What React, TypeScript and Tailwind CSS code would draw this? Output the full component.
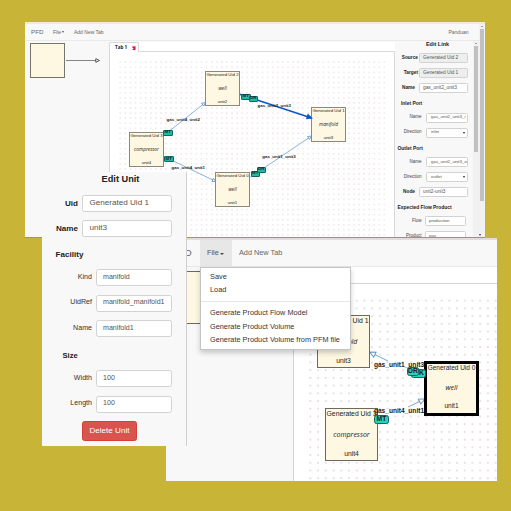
import React from "react";

type NodeData = { x: number; y: number; uid: string; kind: string; name: string; selected?: boolean };
type LinkData = { x1: number; y1: number; x2: number; y2: number; active?: boolean };
type LabelData = { x: number; y: number; text: string };
type BadgeData = { x: number; y: number; text: string };

type DiagramProps = {
  big?: boolean;
  nodes: NodeData[];
  links: LinkData[];
  labels: LabelData[];
  badges: BadgeData[];
};

function ArrowHead({ link, big }: { link: LinkData; big?: boolean }) {
  const angle = (Math.atan2(link.y2 - link.y1, link.x2 - link.x1) * 180) / Math.PI;
  const at = `translate(${link.x2} ${link.y2}) rotate(${angle})`;
  if (link.active) return <path d="M0 0L-6.5 -3V3Z" fill="#0b57c8" transform={at} />;
  return big ? (
    <path d="M0 0L-6 -2.7V2.7Z" fill="#fff" stroke="#5b90c8" strokeWidth="0.9" transform={at} />
  ) : (
    <path d="M0 0L-3.6 -1.7V1.7Z" fill="#fff" stroke="#5f97cf" strokeWidth="0.8" transform={at} />
  );
}

function Diagram({ big, nodes, links, labels, badges }: DiagramProps) {
  return (
    <div className="relative h-full w-full overflow-hidden font-['Liberation_Sans',sans-serif] text-[#222]">
      <svg className="absolute inset-0 h-full w-full">
        <defs>
          {big ? (
            <pattern id="grid-big" x="12.5" y="12.8" width="7.72" height="7.72" patternUnits="userSpaceOnUse">
              <circle cx="3.86" cy="3.86" r="0.66" fill="#c8a6ab" />
            </pattern>
          ) : (
            <pattern id="grid-small" x="7.75" y="7.7" width="5.08" height="5.08" patternUnits="userSpaceOnUse">
              <circle cx="2.54" cy="2.54" r="0.55" fill="#dcc3c7" />
            </pattern>
          )}
        </defs>
        {big ? (
          <rect x="13" y="13" width="200" height="190" fill="url(#grid-big)" />
        ) : (
          <rect x="8" y="8" width="267" height="180" fill="url(#grid-small)" />
        )}
        {links.map((l, i) => (
          <g key={i}>
            <line
              x1={l.x1}
              y1={l.y1}
              x2={l.x2}
              y2={l.y2}
              stroke={l.active ? "#0b57c8" : big ? "#6d9dd2" : "#79abd8"}
              strokeWidth={l.active ? 1.7 : 0.9}
            />
            {!l.active && <ArrowHead link={l} big={big} />}
          </g>
        ))}
      </svg>
      {nodes.map((n, i) => (
        <div
          key={i}
          className={
            "absolute flex flex-col items-center justify-between overflow-hidden whitespace-nowrap bg-[#fef8e3] leading-none " +
            (n.selected
              ? "z-10 h-[55px] w-[55px] border-[3px] border-black pt-[1.5px] pb-[3px] text-[6.5px]"
              : big
                ? "h-[53px] w-[53px] border border-[#6c685e] pt-[1.5px] pb-[2px] text-[6.8px]"
                : "h-[35px] w-[35px] border border-[#8c887c] pt-px pb-px text-[4.4px]")
          }
          style={{ left: n.x, top: n.y }}
        >
          <span>{n.uid}</span>
          <span className={"font-['Open_Sans',sans-serif] italic " + (big ? "text-[7px]" : "text-[4.8px]")}>{n.kind}</span>
          <span>{n.name}</span>
        </div>
      ))}
      {labels.map((l, i) => (
        <span
          key={i}
          className={
            big
              ? "absolute -translate-x-1/2 -translate-y-1/2 whitespace-nowrap text-[6.6px] leading-none font-bold"
              : "absolute -translate-x-1/2 -translate-y-1/2 whitespace-nowrap text-[4.4px] leading-none font-bold"
          }
          style={{ left: l.x, top: l.y }}
        >
          {l.text}
        </span>
      ))}
      <svg className="absolute inset-0 h-full w-full">
        {links.map((l, i) => (l.active ? <ArrowHead key={i} link={l} /> : null))}
      </svg>
      {badges.map((b, i) => (
        <span
          key={i}
          className={
            big
              ? "absolute flex h-[9px] w-[15px] items-center justify-center rounded-[2.5px] border border-[#16665f] bg-[#27d1bd] text-[6.8px] leading-none font-bold"
              : "absolute flex h-[6px] w-[9.5px] items-center justify-center rounded-[1px] border-[0.5px] border-[#16665f] bg-[#1cbba6] text-[4.4px] leading-none font-bold"
          }
          style={{ left: b.x, top: b.y }}
        >
          {b.text}
        </span>
      ))}
    </div>
  );
}

const mainDiagram: DiagramProps = {
  nodes: [
    { x: 95, y: 19, uid: "Generated Uid 2", kind: "well", name: "unit2" },
    { x: 201, y: 55, uid: "Generated Uid 1", kind: "manifold", name: "unit3" },
    { x: 19, y: 80, uid: "Generated Uid 3", kind: "compressor", name: "unit4" },
    { x: 105, y: 120, uid: "Generated Uid 0", kind: "well", name: "unit1" },
  ],
  links: [
    { x1: 129, y1: 42, x2: 203, y2: 66.5, active: true },
    { x1: 139, y1: 126, x2: 201.5, y2: 84 },
    { x1: 53, y1: 84, x2: 95.5, y2: 50.5 },
    { x1: 53, y1: 104, x2: 106, y2: 129.5 },
  ],
  labels: [
    { x: 164.3, y: 53.5, text: "gas_unit2_unit3" },
    { x: 169, y: 105.2, text: "gas_unit1_unit3" },
    { x: 73.3, y: 67.7, text: "gas_unit4_unit2" },
    { x: 78.3, y: 116.3, text: "gas_unit4_unit1" },
  ],
  badges: [
    { x: 131, y: 41.5, text: "MT" },
    { x: 138.5, y: 43.5, text: "DR" },
    { x: 140.5, y: 118.5, text: "MT" },
    { x: 146.5, y: 114.5, text: "DR" },
    { x: 53, y: 77.5, text: "MT" },
    { x: 54, y: 104, text: "MT" },
  ],
};

const zoomDiagram: DiagramProps = {
  big: true,
  nodes: [
    { x: 23, y: 31, uid: "Generated Uid 1", kind: "manifold", name: "unit3" },
    { x: 31, y: 124, uid: "Generated Uid 3", kind: "compressor", name: "unit4" },
    { x: 130, y: 76.5, uid: "Generated Uid 0", kind: "well", name: "unit1", selected: true },
  ],
  links: [
    { x1: 94, y1: 77, x2: 75.5, y2: 68 },
    { x1: 114, y1: 123, x2: 131, y2: 115 },
  ],
  labels: [
    { x: 105, y: 80.7, text: "gas_unit1_unit3" },
    { x: 105, y: 127.2, text: "gas_unit4_unit1" },
  ],
  badges: [
    { x: 80, y: 131, text: "MT" },
  ],
};

const stackedBadge =
  "absolute z-20 flex h-[9px] items-center rounded-[2.5px] border border-[#16665f] bg-[#27d1bd] text-[6.8px] leading-none font-bold text-[#222]";

type FieldProps = { label: string; value: string; nested?: boolean; disabled?: boolean; select?: boolean; narrow?: boolean; flush?: boolean };

/* One row of the link form; nested rows have lighter labels and narrower boxes. */
function LinkField({ label, value, nested, disabled, select, narrow, flush }: FieldProps) {
  return (
    <div className="flex h-[10px] items-center">
      <span
        className={
          nested
            ? "w-[26.5px] text-right text-[4.5px]"
            : "w-[23px] text-right text-[4.8px] font-bold text-[#222] " + (flush ? "" : "pr-[3px]")
        }
      >
        {label}
      </span>
      <span
        className={
          "flex h-[10px] items-center justify-between rounded-[1.5px] border border-[#d2d2d2] text-[4.8px] whitespace-nowrap text-[#555] " +
          (nested ? (narrow ? "ml-[3px] w-[41px] pl-[3.5px] " : "ml-[4.5px] w-[42px] pl-[4px] ") : "ml-[0.5px] w-[49px] pl-[3.5px] ") +
          (disabled ? "bg-[#eee]" : "bg-white")
        }
      >
        <span className={nested ? "text-[4.4px]" : ""}>{value}</span>
        {select && <span className="mr-[2.5px] border-x-[1.2px] border-t-[2px] border-x-transparent border-t-[#222]" />}
      </span>
    </div>
  );
}

function LinkHeading({ children, inset }: { children: React.ReactNode; inset?: boolean }) {
  return (
    <h3 className={"text-[4.9px] leading-[6px] font-bold whitespace-nowrap text-[#222] " + (inset ? "pl-[6px]" : "pl-[2.5px]")}>
      {children}
    </h3>
  );
}

function EditLink() {
  return (
    <aside className="h-full w-[78px] shrink-0 overflow-hidden bg-[#f8f8f8] text-[#444]">
      <h2 className="h-[12px] pl-[7px] text-center text-[5.5px] leading-[6px] font-bold text-[#222]">Edit Link</h2>
      <div className="flex flex-col gap-[5px]">
        <LinkField label="Source" value="Generated Uid 2" disabled flush />
        <LinkField label="Target" value="Generated Uid 1" disabled flush />
        <LinkField label="Name" value="gas_unit2_unit3" />
      </div>
      <div className="h-[8px]" />
      <LinkHeading inset>Inlet Port</LinkHeading>
      <div className="flex flex-col gap-[5px] pt-[5.5px]">
        <LinkField label="Name" value="gas_unit2_unit3_i" nested />
        <LinkField label="Direction" value="inlet" nested select />
      </div>
      <div className="h-[8px]" />
      <LinkHeading>Outlet Port</LinkHeading>
      <div className="flex flex-col gap-[5px] pt-[5.5px]">
        <LinkField label="Name" value="gas_unit2_unit3_o" nested />
        <LinkField label="Direction" value="outlet" nested select />
        <LinkField label="Node" value="unit2-unit3" />
      </div>
      <div className="h-[8px]" />
      <LinkHeading>Expected Flow Product</LinkHeading>
      <div className="flex flex-col gap-[5px] pt-[5px]">
        <LinkField label="Flow" value="production" nested narrow />
        <LinkField label="Product" value="gas" nested narrow />
      </div>
    </aside>
  );
}

const scrollUp = "mt-[2px] mb-[2px] border-x-[1.2px] border-b-[1.5px] border-x-transparent border-b-[#555]";

function MainWindow() {
  return (
    <section className="absolute top-[22px] left-[25px] flex h-[216px] w-[460px] overflow-hidden border-t-2 border-b border-t-[#eeeade] border-b-[#a3965a] bg-[#f8f8f8]">
      <div className="flex w-[454px] flex-col">
        <nav className="flex h-[17px] shrink-0 items-center border-b border-[#eaeaea] text-[5px] whitespace-nowrap text-[#666]">
          <span className="w-[28px] pl-[6px] text-[6.2px]">PFD</span>
          <span className="flex w-[21px] items-center gap-px">
            File
            <span className="border-x-[1.2px] border-t-[2px] border-x-transparent border-t-[#555]" />
          </span>
          <span className="grow">Add New Tab</span>
          <span className="pr-[10.5px]">Panduan</span>
        </nav>
        <div className="flex min-h-0 grow">
          <div className="flex w-[84px] shrink-0 items-start gap-[1px] pt-[2px] pl-[5px]">
            <div className="h-[35px] w-[35px] shrink-0 border border-[#77746c] bg-[#fef8e3]" />
            <svg className="mt-[14px] h-[6px] w-[36px]" viewBox="0 0 36 6">
              <path d="M0 3.5H30" stroke="#666" strokeWidth="0.8" />
              <path d="M33.5 3.5L29.8 1.7V5.3Z" fill="#fff" stroke="#444" strokeWidth="0.9" />
            </svg>
          </div>
          <div className="flex w-[286px] shrink-0 flex-col">
            <div className="flex h-[11px] shrink-0">
              <div className="mt-px flex w-[30px] shrink-0 items-center justify-between rounded-t-[2px] border-t border-r border-l border-[#d8d8d8] bg-white pr-[2px] pl-[5px] font-['Open_Sans',sans-serif] text-[4.6px] leading-none font-bold whitespace-nowrap text-[#222]">
                Tab 1
                <svg className="h-[4px] w-[4px] shrink-0" viewBox="0 0 4 4">
                  <path d="M0.5 0.5L3.5 3.5M3.5 0.5L0.5 3.5" stroke="#d81828" strokeWidth="1.5" />
                </svg>
              </div>
              <div className="mt-px grow border-b border-[#d8d8d8] bg-white" />
            </div>
            <div className="min-h-0 grow border-r border-l border-[#d8d8d8] bg-white">
              <Diagram {...mainDiagram} />
            </div>
          </div>
          <EditLink />
          <div className="flex w-[6px] flex-col items-center bg-[#f1f1f1]">
            <span className={scrollUp} />
            <div className="h-[106px] w-[4px] bg-[#c1c1c1]" />
          </div>
        </div>
      </div>
      <div className="flex w-[6px] shrink-0 flex-col items-center bg-[#f1f1f1]">
        <span className={scrollUp} />
        <div className="h-[172px] w-[4px] bg-[#c1c1c1]" />
        <span className="mt-auto mr-[4px] mb-px border-x-[1.3px] border-t-[2px] border-x-transparent border-t-[#333]" />
      </div>
    </section>
  );
}

const menuItem = "block h-[13.5px] pl-[9px] leading-[13.5px]";

function ZoomWindow() {
  return (
    <section className="absolute top-[238px] left-[166px] h-[243px] w-[331px]">
      <div className="flex h-full w-full flex-col overflow-hidden border-t-2 border-[#dedede] bg-[#f8f8f8]">
        <nav className="flex h-[27px] shrink-0 items-center border-b border-[#e7e7e7] text-[7.3px] whitespace-nowrap text-[#666]">
          <span className="w-[34px] pl-[6.5px] text-[9.6px]">PFD</span>
          <span className="flex h-full w-[32px] items-center gap-[1.5px] bg-[#e7e7e7] pl-[7px] text-[#555]">
            File
            <span className="mt-px border-x-2 border-t-2 border-x-transparent border-t-[#444]" />
          </span>
          <span className="pl-[7px]">Add New Tab</span>
        </nav>
        <div className="flex min-h-0 grow">
          <div className="w-[127px] shrink-0 pt-[4px]">
            <div className="h-[53px] w-[50px] border border-[#6c685e] bg-[#fef8e3]" />
          </div>
          <div className="flex grow flex-col">
            <div className="h-[17px] shrink-0 border-b border-[#d4d4d4] bg-white" />
            <div className="relative min-h-0 grow border-l border-[#d4d4d4] bg-white">
              <Diagram {...zoomDiagram} />
              <span className={stackedBadge + " top-[84.5px] left-[117px] w-[15px] justify-end pr-[1px]"}>K</span>
              <span className={stackedBadge + " top-[82.5px] left-[113px] w-[12px] justify-center"}>DR</span>
            </div>
          </div>
        </div>
      </div>
      <div className="absolute top-[28.5px] left-[34px] z-30 h-[83px] w-[151px] border border-[#c4c4c4] bg-white pt-[2px] text-[7.33px] whitespace-nowrap text-[#333] shadow-[0_3px_5px_rgba(0,0,0,0.2)]">
        <span className={menuItem}>Save</span>
        <span className={menuItem}>Load</span>
        <div className="mt-[4px] mb-[4.5px] h-px bg-[#e5e5e5]" />
        <span className={menuItem}>Generate Product Flow Model</span>
        <span className={menuItem}>Generate Product Volume</span>
        <span className={menuItem}>Generate Product Volume from PFM file</span>
      </div>
    </section>
  );
}

function UnitField({ label, value, nested }: { label: string; value: string; nested?: boolean }) {
  return (
    <div className="mb-[8.5px] flex h-[17px] items-center whitespace-nowrap">
      <span
        className={
          nested ? "w-[50px] text-right text-[7.1px]" : "w-[36px] pt-[2px] text-right text-[8.1px] font-bold text-[#222]"
        }
      >
        {label}
      </span>
      <span
        className={
          "flex h-[17px] items-center rounded-[2.5px] border border-[#d2d2d2] bg-white pl-[6.5px] text-[#555] " +
          (nested ? "ml-[3.5px] w-[76.5px] text-[7.1px]" : "ml-[4px] w-[90px] text-[8.1px]")
        }
      >
        {value}
      </span>
    </div>
  );
}

function EditUnit() {
  return (
    <section className="absolute top-[172px] left-[42px] z-40 h-[274px] w-[145px] border-r border-[#cfcfcf] bg-[#f8f8f8] text-[#333]">
      <h2 className="h-[22.5px] pl-[13px] text-center text-[9.2px] leading-[14px] font-bold text-[#222]">Edit Unit</h2>
      <UnitField label="Uid" value="Generated Uid 1" />
      <UnitField label="Name" value="unit3" />
      <h3 className="mb-[6.5px] h-[17px] pl-[13.5px] text-[8.1px] leading-[18px] font-bold text-[#222]">Facility</h3>
      <UnitField label="Kind" value="manifold" nested />
      <UnitField label="UidRef" value="manifold_manifold1" nested />
      <UnitField label="Name" value="manifold1" nested />
      <h3 className="mb-[7.5px] h-[17px] pl-[20.5px] text-[7.6px] leading-[20px] font-bold text-[#222]">Size</h3>
      <UnitField label="Width" value="100" nested />
      <UnitField label="Length" value="100" nested />
      <button className="ml-[40px] block h-[20px] w-[55px] rounded-[2.5px] border border-[#d43f3a] bg-[#d9534f] text-[8.1px] leading-none whitespace-nowrap text-white">
        Delete Unit
      </button>
    </section>
  );
}

export default function App() {
  return (
    <main className="relative h-[511px] w-[511px] overflow-hidden bg-[#c8b436] font-['Liberation_Sans',Arial,sans-serif] leading-none">
      <MainWindow />
      <ZoomWindow />
      <EditUnit />
    </main>
  );
}
